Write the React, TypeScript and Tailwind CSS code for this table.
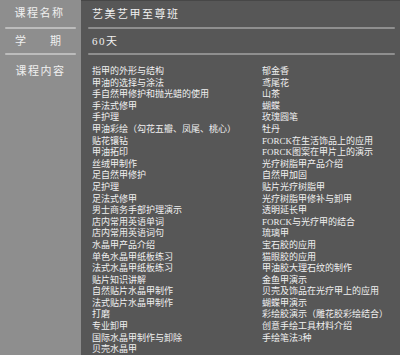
import React from "react";

const leftItems = [
  "指甲的外形与结构",
  "甲油的选择与涂法",
  "手自然甲修护和抛光蜡的使用",
  "手法式修甲",
  "手护理",
  "甲油彩绘（勾花五瓣、凤尾、桃心）",
  "贴花镶钻",
  "甲油拓印",
  "丝绒甲制作",
  "足自然甲修护",
  "足护理",
  "足法式修甲",
  "男士商务手部护理演示",
  "店内常用英语单词",
  "店内常用英语词句",
  "水晶甲产品介绍",
  "单色水晶甲纸板练习",
  "法式水晶甲纸板练习",
  "贴片知识讲解",
  "自然贴片水晶甲制作",
  "法式贴片水晶甲制作",
  "打磨",
  "专业卸甲",
  "国际水晶甲制作与卸除",
  "贝壳水晶甲",
];

const rightItems = [
  "郁金香",
  "鸢尾花",
  "山茶",
  "蝴蝶",
  "玫瑰圆笔",
  "牡丹",
  "FORCK在生活饰品上的应用",
  "FORCK图案在甲片上的演示",
  "光疗树脂甲产品介绍",
  "自然甲加固",
  "贴片光疗树脂甲",
  "光疗树脂甲修补与卸甲",
  "透明延长甲",
  "FORCK与光疗甲的结合",
  "琉璃甲",
  "宝石胶的应用",
  "猫眼胶的应用",
  "甲油胶大理石纹的制作",
  "金鱼甲演示",
  "贝壳及饰品在光疗甲上的应用",
  "蝴蝶甲演示",
  "彩绘胶演示（雕花胶彩绘结合）",
  "创意手绘工具材料介绍",
  "手绘笔法3种",
];

const font = {
  fontFamily: '"Liberation Serif", "Noto Sans CJK SC", serif',
};

function LeftRule() {
  return <div className="mx-[5px] h-[2px] rounded-full bg-[#bcbcbc]" />;
}

function RightRule() {
  return <div className="ml-[7px] mr-[5px] h-[2px] rounded-full bg-[#8f8f8f]" />;
}

export default function App() {
  return (
    <div
      className="flex h-[355px] w-[400px] flex-col overflow-hidden bg-[#575757] text-[#f0f0f0]"
      style={font}
    >
      {/* course name */}
      <div className="flex">
        <div className="flex w-[81px] flex-col bg-[#8e8e8e]">
          <div className="flex h-[27px] items-center justify-center pr-[2px] text-[11px] tracking-[1.5px]">
            课程名称
          </div>
          <LeftRule />
        </div>
        <div className="flex flex-1 flex-col border-t border-[#474747]">
          <div className="flex h-[26px] items-center pl-[11px] text-[11px] tracking-[1.5px]">
            艺美艺甲至尊班
          </div>
          <RightRule />
        </div>
      </div>

      {/* term */}
      <div className="flex">
        <div className="flex w-[81px] flex-col bg-[#8e8e8e]">
          <div className="flex h-[24px] items-center justify-between pl-[15px] pr-[20px] text-[11px]">
            <span>学</span>
            <span>期</span>
          </div>
          <LeftRule />
        </div>
        <div className="flex flex-1 flex-col">
          <div className="flex h-[24px] items-center pl-[11px] text-[11px] tracking-[1.5px]">
            60天
          </div>
          <RightRule />
        </div>
      </div>

      {/* course content */}
      <div className="flex flex-1">
        <div className="w-[81px] bg-[#8e8e8e] pt-[9px] text-center text-[11px] leading-[14px] tracking-[1.5px]">
          课程内容
        </div>
        <div className="flex flex-1 pl-[11px] pt-[11px] text-[9px] leading-[11.6px]">
          <div className="flex w-[170px] flex-col whitespace-nowrap">
            {leftItems.map((t) => (
              <div key={t}>{t}</div>
            ))}
          </div>
          <div className="flex flex-col whitespace-nowrap">
            {rightItems.map((t) => (
              <div key={t}>{t}</div>
            ))}
          </div>
        </div>
      </div>
    </div>
  );
}
